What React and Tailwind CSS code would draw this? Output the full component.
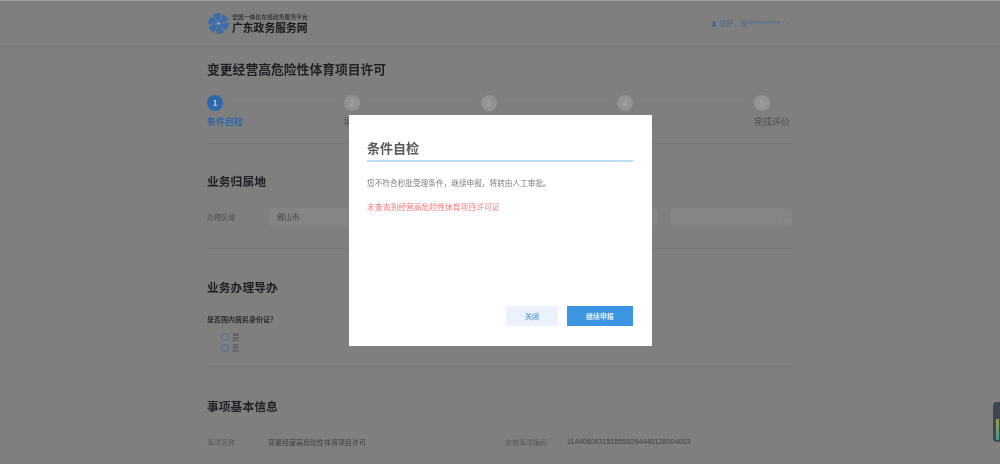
import React from 'react';
import { ChevronDown, User } from 'lucide-react';

const font = { fontFamily: '"Noto Sans CJK SC", "Liberation Sans", sans-serif' };

function Logo() {
    const blade = 'M12 12 L5.4 2.6 L13.8 0.6 L14.8 6.6 Z';
    return (
        <svg viewBox="0 0 24 24" className="w-[23px] h-[23px] shrink-0">
            <g fill="#3a6cab" stroke="#7f7f7f" strokeWidth="0.5">
                <path d={blade} />
                <path d={blade} transform="rotate(60 12 12)" />
                <path d={blade} transform="rotate(120 12 12)" />
                <path d={blade} transform="rotate(180 12 12)" />
                <path d={blade} transform="rotate(240 12 12)" />
                <path d={blade} transform="rotate(300 12 12)" />
            </g>
            <circle cx="12" cy="12" r="1.2" fill="#9db5d0" />
        </svg>
    );
}

function Step({ num, label, active, last }) {
    return (
        <div className={last ? 'w-[39px] shrink-0' : 'flex-1 min-w-0'}>
            <div className="flex items-center">
                <div className={`w-4 h-4 rounded-full flex items-center justify-center text-[8px] font-bold shrink-0 ${active ? 'bg-[#2e68ab] text-[#b8cce2]' : 'bg-[#939393] text-[#a6a6a6]'}`}>
                    {num}
                </div>
                {!last && <div className="flex-1 h-px ml-2 mr-[10px] bg-[#7a7a7a]" />}
            </div>
            <div className={`mt-[4px] text-[9px] leading-[14px] whitespace-nowrap ${active ? 'font-bold text-[#2e68ab]' : 'text-[#4f4f4f]'}`}>
                {label}
            </div>
        </div>
    );
}

function SelectBox({ value }) {
    return (
        <div className="w-[124px] h-5 rounded-sm border border-[#7e7e7e] bg-[#858585] flex items-center justify-between pl-[8px] pr-[5px] text-[7.5px] text-[#444]">
            <span>{value}</span>
            <ChevronDown className="w-[7px] h-[7px] text-[#5f5f5f]" />
        </div>
    );
}

function Radio({ label }) {
    return (
        <div className="flex items-center h-[11px] pl-[14px] text-[7.5px] text-[#4f4f4f]">
            <span className="w-2 h-2 rounded-full border border-[#46769f] mr-[3px]" />
            {label}
        </div>
    );
}

export default function App() {
    return (
        <div className="relative w-[1000px] h-[464px] overflow-hidden bg-[#7f7f7f] blur-[0.3px]" style={font}>
            {/* Header */}
            <div className="h-[47px] border-t border-t-[#a3a3a3] border-b border-b-[#777] flex justify-center">
                <div className="w-[586px] flex items-center justify-between">
                    <div className="flex items-center gap-[2px]">
                        <Logo />
                        <div>
                            <div className="text-[5.85px] leading-[8px] font-medium text-[#2c2c2c] whitespace-nowrap">全国一体化在线政务服务平台</div>
                            <div className="text-[10.8px] leading-[13px] font-bold text-[#17191c] whitespace-nowrap">广东政务服务网</div>
                        </div>
                    </div>
                    <div className="flex items-center text-[7px] text-[#3f6b9d]">
                        <User className="w-[6px] h-[6px] mr-[2px] fill-[#245d99] text-[#245d99]" />
                        <span>您好，深<span style={{ fontFamily: '"Liberation Sans", sans-serif' }}>************</span></span>
                        <ChevronDown className="w-[7px] h-[7px] ml-[5px] mr-[1px] text-[#4f6f92]" />
                    </div>
                </div>
            </div>

            {/* Page */}
            <div className="w-[586px] mx-auto">
                <h1 className="mt-[13px] text-[12.8px] leading-[18px] font-bold text-[#1d2024]">变更经营高危险性体育项目许可</h1>

                <div className="flex mt-[17px] pb-[14px] border-b border-[#767676]">
                    <Step num="1" label="条件自检" active />
                    <Step num="2" label="填写申报" />
                    <Step num="3" label="上传材料" />
                    <Step num="4" label="提交申请" />
                    <Step num="5" label="完成评价" last />
                </div>

                <h2 className="mt-[29px] text-[11.8px] leading-[16px] font-bold text-[#1d2024]">业务归属地</h2>
                <div className="flex items-center mt-[18px] pb-[21px] border-b border-[#767676]">
                    <div className="w-[61px] text-[7px] text-[#4f4f4f]">办理区域</div>
                    <div className="flex-1 flex justify-between">
                        <SelectBox value="佛山市" />
                        <SelectBox />
                        <SelectBox />
                        <SelectBox />
                    </div>
                </div>

                <h2 className="mt-[30px] text-[11.8px] leading-[16px] font-bold text-[#1d2024]">业务办理导办</h2>
                <div className="mt-[18px] text-[7px] leading-[12px] font-bold text-[#2c2c2c]">是否国内居民身份证?</div>
                <div className="mt-[6px] pb-[13px] border-b border-[#767676]">
                    <Radio label="是" />
                    <Radio label="否" />
                </div>

                <h2 className="mt-[31px] text-[11.8px] leading-[16px] font-bold text-[#1d2024]">事项基本信息</h2>
                <div className="flex items-center mt-[22px] text-[7px] leading-[12px] text-[#3f3f3f]">
                    <div className="w-[61px] text-[#585858]">事项名称</div>
                    <div className="w-[237px]">变更经营高危险性体育项目许可</div>
                    <div className="w-[62px] text-[#585858]">实施事项编码</div>
                    <div className="text-[7.2px]" style={{ fontFamily: '"Liberation Sans", sans-serif' }}>1144060631515559294440128004003</div>
                </div>
            </div>

            {/* Side widget */}
            <div className="absolute right-0 top-[402px] w-[7px] h-[40px] rounded-l-sm bg-[#3e4653] flex items-end justify-end pb-[2px] pr-px">
                <div className="w-[3px] h-[21px] bg-gradient-to-b from-[#9c9c45] to-[#3f9a8c]" />
            </div>

            {/* Modal */}
            <div className="absolute left-[349px] top-[115px] w-[303px] h-[231px] bg-white pl-[18px] pr-[19px] pt-[24px] flex flex-col">
                <div className="pb-[3px] border-b-2 border-[#bcdcf2] text-[13px] leading-[18px] font-bold text-[#58595b]">条件自检</div>
                <p className="mt-[15px] text-[7.67px] leading-[12px] text-[#7d7d7d]">您不符合秒批受理条件，继续申报，将转由人工审批。</p>
                <p className="mt-[12px] text-[7.8px] leading-[12px] text-[#f77a7a]">未查询到经营高危险性体育项目许可证</p>
                <div className="mt-auto mb-[20px] flex justify-end gap-[9px]">
                    <button className="w-[52px] h-5 bg-[#eaf3fc] text-[7px] font-bold text-[#6fa3dc]">关闭</button>
                    <button className="w-[66px] h-5 bg-[#3b95e0] text-[7px] font-bold text-[#e8f2fb]">继续申报</button>
                </div>
            </div>
        </div>
    );
}
